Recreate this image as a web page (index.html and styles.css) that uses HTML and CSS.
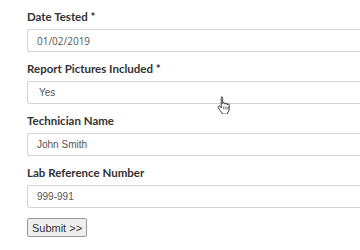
FILE: index.html
```html
<!DOCTYPE html>
<html>
<head>
<meta charset="utf-8">
<link rel="stylesheet" href="styles.css">
</head>
<body>
<form class="form">
  <div class="group">
    <label class="label">Date Tested *</label>
    <div class="field field-date">01/02/2019</div>
  </div>
  <div class="group">
    <label class="label">Report Pictures Included *</label>
    <div class="field field-select">Yes</div>
  </div>
  <div class="group">
    <label class="label">Technician Name</label>
    <div class="field">John Smith</div>
  </div>
  <div class="group">
    <label class="label">Lab Reference Number</label>
    <div class="field">999-991</div>
  </div>
  <button type="button" class="submit">Submit &gt;&gt;</button>
</form>
<svg class="cursor" width="14" height="18" viewBox="0 0 14 18">
  <path d="M4.5 1.2c.7 0 1.2.5 1.2 1.2v5.2c0-.6.5-1 1.1-1s1.1.5 1.1 1.1v.5c0-.6.5-1 1.1-1s1.1.5 1.1 1.1v.6c0-.6.5-1 1.1-1s1 .5 1 1.1v3.6c0 2-1 3.4-1.8 4.4v1.2H5.2v-1.2C3.8 15.4 2.6 13.9 1.4 12c-.5-.8-.3-1.6.3-2 .6-.3 1.2 0 1.6.6l.9 1.3V2.4c0-.7.5-1.2 1.2-1.2z" fill="#fff" stroke="#222" stroke-width="0.9" stroke-linejoin="round"/>
  <path d="M6.8 10.5v3M8.9 10.5v3M11 10.5v3" stroke="#222" stroke-width="0.7"/>
</svg>
</body>
</html>
```
FILE: styles.css
```css
html, body {
  margin: 0;
  padding: 0;
  background: #fff;
  overflow: hidden;
}
body {
  width: 360px;
  height: 250px;
  position: relative;
}
.form {
  box-sizing: border-box;
  display: flex;
  flex-direction: column;
  padding: 7px 0 0 27px;
  width: 360px;
}
.group {
  display: flex;
  flex-direction: column;
  gap: 4px;
  margin-bottom: 7px;
}
.label {
  font-family: Lato, "Open Sans", "Liberation Sans", sans-serif;
  font-weight: 700;
  font-size: 11.5px;
  line-height: 16px;
  height: 16px;
  padding-top: 2px;
  color: #333;
}
.field {
  box-sizing: border-box;
  height: 23px;
  border: 1px solid #d4d4d4;
  border-right: none;
  border-radius: 3px 0 0 3px;
  padding: 0 0 0 9px;
  display: flex;
  align-items: center;
  font-family: "Liberation Sans", Arial, sans-serif;
  font-size: 10px;
  color: #555;
  background: #fff;
}
.field-date {
  font-family: "Open Sans", "Liberation Sans", sans-serif;
  font-size: 10px;
}
.field-select {
  padding-left: 11px;
}
.submit {
  align-self: flex-start;
  margin-top: 3px;
  box-sizing: border-box;
  width: 60px;
  height: 19px;
  padding: 0;
  border: 1px solid #999;
  border-radius: 2px;
  background: #efefef;
  font-family: "Liberation Sans", Arial, sans-serif;
  font-size: 11px;
  color: #333;
}
.cursor {
  position: absolute;
  left: 217px;
  top: 96px;
}
```
